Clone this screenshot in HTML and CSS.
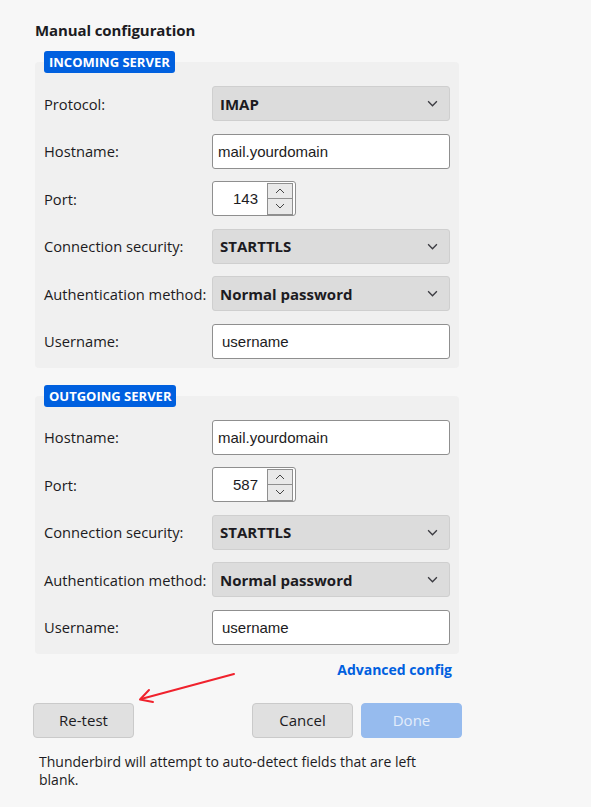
FILE: index.html
```html
<!DOCTYPE html>
<html>
<head>
<meta charset="utf-8">
<link rel="stylesheet" href="styles.css">
</head>
<body>
<div class="page">
  <h2 class="title">Manual configuration</h2>

  <section class="box">
    <div class="legend">INCOMING SERVER</div>
    <div class="form">
      <label>Protocol:</label>
      <div class="select"><span>IMAP</span><svg class="chev" viewBox="0 0 10 6"><path d="M1 1 L5 5 L9 1" fill="none" stroke="#3a3a40" stroke-width="1.2"/></svg></div>
      <label>Hostname:</label>
      <div class="input">mail.yourdomain</div>
      <label>Port:</label>
      <div class="port"><span class="num">143</span><div class="spin"><div class="up"><svg viewBox="0 0 10 6"><path d="M1 5 L5 1 L9 5" fill="none" stroke="#444" stroke-width="1"/></svg></div><div class="down"><svg viewBox="0 0 10 6"><path d="M1 1 L5 5 L9 1" fill="none" stroke="#444" stroke-width="1"/></svg></div></div></div>
      <label>Connection security:</label>
      <div class="select"><span>STARTTLS</span><svg class="chev" viewBox="0 0 10 6"><path d="M1 1 L5 5 L9 1" fill="none" stroke="#3a3a40" stroke-width="1.2"/></svg></div>
      <label>Authentication method:</label>
      <div class="select"><span>Normal password</span><svg class="chev" viewBox="0 0 10 6"><path d="M1 1 L5 5 L9 1" fill="none" stroke="#3a3a40" stroke-width="1.2"/></svg></div>
      <label>Username:</label>
      <div class="input user">username</div>
    </div>
  </section>

  <section class="box second">
    <div class="legend">OUTGOING SERVER</div>
    <div class="form">
      <label>Hostname:</label>
      <div class="input">mail.yourdomain</div>
      <label>Port:</label>
      <div class="port"><span class="num">587</span><div class="spin"><div class="up"><svg viewBox="0 0 10 6"><path d="M1 5 L5 1 L9 5" fill="none" stroke="#444" stroke-width="1"/></svg></div><div class="down"><svg viewBox="0 0 10 6"><path d="M1 1 L5 5 L9 1" fill="none" stroke="#444" stroke-width="1"/></svg></div></div></div>
      <label>Connection security:</label>
      <div class="select"><span>STARTTLS</span><svg class="chev" viewBox="0 0 10 6"><path d="M1 1 L5 5 L9 1" fill="none" stroke="#3a3a40" stroke-width="1.2"/></svg></div>
      <label>Authentication method:</label>
      <div class="select"><span>Normal password</span><svg class="chev" viewBox="0 0 10 6"><path d="M1 1 L5 5 L9 1" fill="none" stroke="#3a3a40" stroke-width="1.2"/></svg></div>
      <label>Username:</label>
      <div class="input user">username</div>
    </div>
  </section>

  <div class="adv-row"><a class="adv">Advanced config</a></div>

  <div class="buttons">
    <button class="btn">Re-test</button>
    <div class="right">
      <button class="btn">Cancel</button>
      <button class="btn done">Done</button>
    </div>
  </div>

  <p class="note">Thunderbird will attempt to auto-detect fields that are left blank.</p>

  <svg class="arrow" width="110" height="40" viewBox="0 0 110 40">
    <path d="M101 4 L8 29" fill="none" stroke="#f0222d" stroke-width="2" stroke-linecap="round"/>
    <path d="M16 20 L7 29.5 L20 32" fill="none" stroke="#f0222d" stroke-width="2" stroke-linecap="round" stroke-linejoin="round"/>
  </svg>
</div>
</body>
</html>
```

FILE: styles.css
```css
* { box-sizing: border-box; }
html, body { margin: 0; padding: 0; }
body {
  background: #f7f7f7;
  font-family: "Open Sans", "Noto Sans", sans-serif;
  color: #1c1b22;
  width: 591px;
  height: 807px;
  overflow: hidden;
}
.page {
  position: relative;
  padding: 19px 0 0 35px;
  width: 591px;
}
.title {
  margin: 0 0 21px 0;
  font-size: 15px;
  font-weight: 700;
  line-height: 22px;
  letter-spacing: -0.1px;
}
.box {
  display: flow-root;
  width: 424px;
  background: #f0f0f0;
  border-radius: 4px;
  padding: 0 9px 9px 9px;
}
.box.second { margin-top: 28px; }
.legend {
  display: block;
  width: fit-content;
  margin-top: -11px;
  height: 22px;
  padding: 0 5px;
  background: #0060df;
  color: #fff;
  font-size: 13px;
  font-weight: 700;
  line-height: 22px;
  border-radius: 3px;
}
.form {
  display: grid;
  grid-template-columns: 168px 238px;
  row-gap: 12.5px;
  align-items: center;
  margin-top: 13px;
}
.form label {
  font-size: 14.7px;
  line-height: 20px;
}
.select {
  height: 35px;
  background: #dcdcdc;
  border: 1px solid #cfcfcf;
  border-radius: 3px;
  display: flex;
  align-items: center;
  justify-content: space-between;
  padding: 0 11px 0 7px;
  font-size: 15px;
  font-weight: 700;
}
.chev { width: 11px; height: 7px; }
.input {
  height: 35px;
  background: #fff;
  border: 1px solid #8f8f8f;
  border-radius: 3px;
  display: flex;
  align-items: center;
  padding: 0 5px;
  font-family: "Liberation Sans", Arial, sans-serif;
  font-size: 15px;
}
.input.user { padding-left: 9px; }
.port {
  width: 84px;
  height: 35px;
  background: #fff;
  border: 1px solid #8f8f8f;
  border-radius: 3px;
  display: flex;
  align-items: center;
  padding: 0 2px 0 0;
  font-family: "Liberation Sans", Arial, sans-serif;
  font-size: 15px;
}
.port .num { flex: 1; text-align: right; padding-right: 9px; }
.spin {
  width: 26px;
  height: 32px;
  display: flex;
  flex-direction: column;
  border: 1px solid #8f8f8f;
  background: #e9e9e9;
}
.spin .up, .spin .down {
  flex: 1;
  display: flex;
  align-items: center;
  justify-content: center;
}
.spin .up { border-bottom: 1px solid #8f8f8f; }
.spin svg { width: 10px; height: 6px; }
.adv-row {
  width: 417px;
  display: flex;
  justify-content: flex-end;
  margin-top: 7px;
}
.adv {
  color: #0060df;
  font-size: 14px;
  font-weight: 700;
  line-height: 18px;
}
.buttons {
  display: flex;
  justify-content: space-between;
  width: 429px;
  margin-left: -2px;
  margin-top: 24px;
}
.right { display: flex; gap: 8px; }
.btn {
  width: 101px;
  height: 35px;
  background: #e0e0e0;
  border: 1px solid #cacaca;
  border-radius: 4px;
  font-family: "Open Sans", "Noto Sans", sans-serif;
  font-size: 15px;
  color: #1c1b22;
  padding: 0;
}
.btn.done {
  background: #96bbee;
  border-color: #96bbee;
  color: #e3edfb;
}
.note {
  margin: 15px 0 0 4px;
  width: 400px;
  font-size: 14px;
  line-height: 18px;
  color: #1c1b22;
}
.arrow {
  position: absolute;
  left: 133px;
  top: 670px;
}
```
